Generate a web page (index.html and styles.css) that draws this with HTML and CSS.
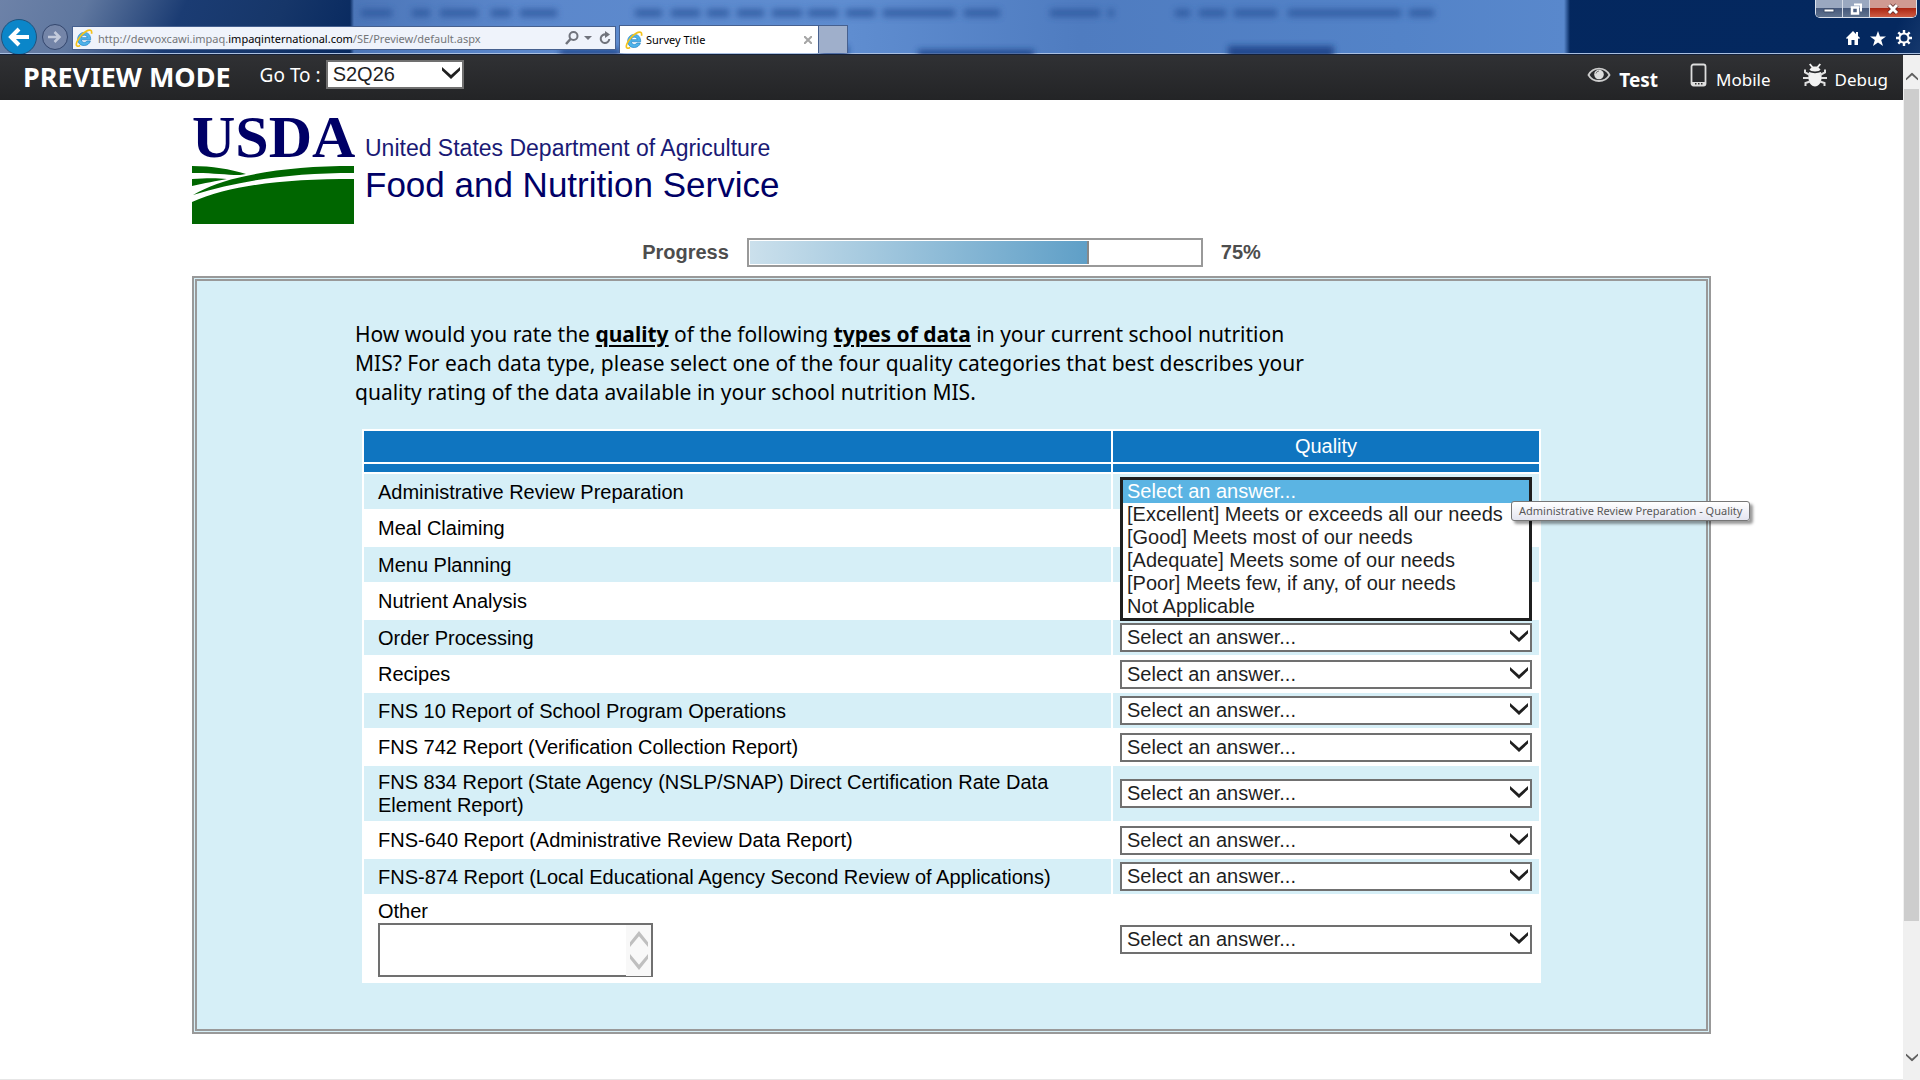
FILE: index.html
```html
<!DOCTYPE html>
<html lang="en">
<head>
<meta charset="utf-8">
<title>Survey Title</title>
<link rel="stylesheet" href="styles.css">
</head>
<body>
<svg class="defs" aria-hidden="true">
  <symbol id="ie" viewBox="0 0 16 16">
    <path d="M13.9 9.6H5.6c.2 1.5 1.2 2.3 2.7 2.3 1.1 0 1.9-.4 2.4-1.200h3c-.8 2.500-2.900 4-5.500 4-3.400 0-5.800-2.300-5.800-5.700S4.900 3 8.200 3c3.700 0 5.900 2.600 5.700 6.600zM10.800 7.700C10.700 6.300 9.700 5.500 8.300 5.500c-1.400 0-2.400.8-2.600 2.200z" fill="#4db3ea" stroke="#1d7fc4" stroke-width=".6"/>
    <path d="M14.600 4.300c.4-1.500.2-2.700-.7-3.100C12 .4 8.200 2.500 5.100 6.200 1.900 9.900.3 13.800 1.700 15c.6.5 1.700.3 2.900-.3" fill="none" stroke="#f3c21b" stroke-width="1.500"/>
  </symbol>
  <symbol id="chevron" viewBox="0 0 18 12">
    <path d="M0 0l9 8 9-8v3.500L9 12 0 3.500z" fill="currentColor"/>
  </symbol>
</svg>

<header class="chrome">
  <svg class="backdrop" aria-hidden="true">
    <defs><filter id="soft" x="-5%" y="-100%" width="110%" height="300%"><feGaussianBlur stdDeviation="3"/></filter></defs>
    <g filter="url(#soft)" fill="#2f589e" opacity=".8">
      <path d="M361 9h31v8h-31zM412 9h18v8h-18zM440 9h38v8h-38zM491 9h20v8h-20zM520 9h37v8h-37zM635 9h27v8h-27zM671 9h29v8h-29zM707 9h22v8h-22zM737 9h27v8h-27zM772 9h30v8h-30zM808 9h30v8h-30zM846 9h29v8h-29zM883 9h72v8h-72zM964 9h36v8h-36zM1050 9h50v8h-50zM1108 9h6v8h-6zM1175 9h15v8h-15zM1199 9h27v8h-27zM1234 9h43v8h-43zM1288 9h113v8h-113zM1409 9h25v8h-25z"/>
      <path d="M560 49h60v8h-60zM820 46h28v10h-28zM918 50h116v8h-116zM1228 46h106v14h-106z" fill="#123a80"/>
    </g>
  </svg>
  <div class="caption">
    <button class="cap" aria-label="Minimize"><svg width="12" height="8" viewBox="0 0 12 8"><path d="M1 4h10v3H1z" fill="#fff" stroke="#3d4c68" stroke-width="1"/></svg></button>
    <button class="cap" aria-label="Restore"><svg width="14" height="14" viewBox="0 0 14 14"><path d="M5 2.500h7v7" fill="none" stroke="#fff" stroke-width="2"/><path d="M3 5.500h6v6H3z" fill="none" stroke="#fff" stroke-width="2.500"/></svg></button>
    <button class="cap close" aria-label="Close"><svg width="12" height="12" viewBox="0 0 12 12"><path d="M2 2l8 8M10 2l-8 8" stroke="#5a2a2a" stroke-width="4.500"/><path d="M2 2l8 8M10 2l-8 8" stroke="#fff" stroke-width="3"/></svg></button>
  </div>
  <div class="navbar">
    <button class="back" aria-label="Back"><svg width="24" height="24" viewBox="0 0 24 24"><path d="M22 12H5M12 4l-8 8 8 8" fill="none" stroke="#fff" stroke-width="4"/></svg></button>
    <button class="forward" aria-label="Forward"><svg width="14" height="14" viewBox="0 0 14 14"><path d="M0 7h11M6.500 2l5 5-5 5" fill="none" stroke="#c3cbdc" stroke-width="2.500"/></svg></button>
    <div class="address">
      <svg width="18" height="18"><use href="#ie"/></svg>
      <span class="url">http://devvoxcawi.impaq.<b>impaqinternational.com</b>/SE/Preview/default.aspx</span>
      <button class="plain" aria-label="Search"><svg width="14" height="14" viewBox="0 0 14 14"><circle cx="8.500" cy="5" r="4" fill="none" stroke="#70737c" stroke-width="2"/><path d="M5.500 8L1 13" stroke="#70737c" stroke-width="2.500"/></svg></button>
      <button class="plain" aria-label="Search options"><svg width="8" height="4"><path d="M0 0h8L4 4z" fill="#70737c"/></svg></button>
      <button class="plain reload" aria-label="Refresh"><svg width="12" height="14" viewBox="0 0 12 14"><path d="M7 3.500A4.300 4.300 0 1 0 10.300 8" fill="none" stroke="#70737c" stroke-width="2"/><path d="M6 0l5 3.500L6 7z" fill="#70737c"/></svg></button>
    </div>
    <div class="tab">
      <svg width="18" height="18"><use href="#ie"/></svg>
      <span class="tab-title">Survey Title</span>
      <button class="plain" aria-label="Close tab"><svg width="8" height="8" viewBox="0 0 8 8"><path d="M0 0l8 8M8 0L0 8" stroke="#a5a5a5" stroke-width="2"/></svg></button>
    </div>
    <button class="new-tab" aria-label="New tab"></button>
    <div class="tools">
      <button class="plain" aria-label="Home"><svg width="14" height="14" viewBox="0 0 14 14"><path d="M7 0L0 7l1 1 1-.7V14h3.500V9h3v5H12V7.300l1 .7 1-1-2-2V1h-2v2z" fill="#fff"/></svg></button>
      <button class="plain" aria-label="Favorites"><svg width="16" height="15" viewBox="0 0 16 15"><path d="M8 0l2 5.500h6L11.200 9l1.800 6-5-3.600L3 15l1.800-6L0 5.500h6z" fill="#fff"/></svg></button>
      <button class="plain" aria-label="Tools"><svg width="16" height="16" viewBox="0 0 16 16"><circle cx="8" cy="8" r="4.500" fill="none" stroke="#fff" stroke-width="2"/><path d="M8 0v3M8 13v3M0 8h3M13 8h3M2.300 2.300l2.200 2.200M11.500 11.500l2.200 2.200M2.300 13.700l2.200-2.200M11.500 4.500l2.200-2.200" stroke="#fff" stroke-width="2.400"/></svg></button>
    </div>
  </div>
</header>

<div class="viewport">
  <div class="page">
    <nav class="preview">
      <strong class="mode">PREVIEW MODE</strong>
      <label for="goto">Go To :</label>
      <span class="pick goto"><select id="goto"><option>S2Q26</option></select><svg width="18" height="12"><use href="#chevron"/></svg></span>
      <div class="views">
        <a href="#test" class="view current"><svg width="24" height="16" viewBox="0 0 24 16"><path d="M1.500 8C6-.5 18-.5 22.500 8 18 16 6 16 1.500 8z" fill="none" stroke="#ccc" stroke-width="1.800"/><circle cx="12" cy="7.500" r="4.800" fill="#ddd"/><path d="M9 6.500A3.200 3.200 0 0 1 12 4" fill="none" stroke="#777"/></svg><span>Test</span></a>
        <a href="#mobile" class="view"><svg width="18" height="24" viewBox="0 0 18 24"><rect x="1.500" y="1.500" width="14" height="21" rx="2" fill="none" stroke="#ddd" stroke-width="1.800"/><path d="M2 19h13v3.500H2z" fill="#ddd"/><path d="M5 20.800h1.500M8 20.800h1.500M11 20.800h1.500" stroke="#333" stroke-width="1.500"/></svg><span>Mobile</span></a>
        <a href="#debug" class="view"><svg width="24" height="24" viewBox="0 0 24 24"><path d="M6.500 6.500C7 9 17 9 17.500 6.500L15.500 4.500l2.500-3-1.500-1L14 3.500h-4L7.500.5 6 1.500l2.500 3zM6 9c3.500 1.500 8.500 1.500 12 0 1.500 6 .5 14-6 14.500C5.500 23 4.500 15 6 9z" fill="#f2f2f2"/><path d="M7 12L2 9.500V6.500M6 15H0M7 18.500L2.500 20v3M17 12l5-2.500v-3M18 15h6M17 18.500l4.500 1.500v3" fill="none" stroke="#e0e0e0" stroke-width="2"/></svg><span>Debug</span></a>
      </div>
    </nav>

    <main class="survey">
      <div class="brand">
        <div class="seal">
          <span class="usda">USDA</span>
          <svg class="fields" viewBox="0 0 162 58" aria-hidden="true"><path d="M0 0c20 0 38 3 54 8-4 1-8 1-12 1C30 8 15 7 0 7zM54 10C85 3 120 0 162 0v7C100 7 50 14 1 29c14-8 32-15 53-19zM0 13c14-1 26-1 35 0C25 15 12 17 0 20zM0 36C42 18 96 13 162 13v45H0z" fill="#060"/></svg>
        </div>
        <div class="agency">
          <span class="dept">United States Department of Agriculture</span>
          <span class="fns">Food and Nutrition Service</span>
        </div>
      </div>

      <div class="progress">
        <span id="plabel">Progress</span>
        <div class="track" role="progressbar" aria-labelledby="plabel" aria-valuenow="75"><div class="fill" style="width: 75%"></div></div>
        <span>75%</span>
      </div>

      <form class="panel">
        <p class="question">How would you rate the <b>quality</b> of the following <b>types of data</b> in your current school nutrition MIS? For each data type, please select one of the four quality categories that best describes your quality rating of the data available in your school nutrition MIS.</p>
        <table class="grid">
          <thead>
            <tr><th class="item"></th><th>Quality</th></tr>
            <tr class="rule"><td></td><td></td></tr>
          </thead>
          <tbody>
            <tr><td><label for="q1">Administrative Review Preparation</label></td><td class="open">
              <div class="slot">
                <select id="q1" class="list" size="6"><option selected>Select an answer...</option><option>[Excellent] Meets or exceeds all our needs</option><option>[Good] Meets most of our needs</option><option>[Adequate] Meets some of our needs</option><option>[Poor] Meets few, if any, of our needs</option><option>Not Applicable</option></select>
                <span class="tooltip" role="tooltip">Administrative Review Preparation - Quality</span>
              </div></td></tr>
            <tr><td><label for="q2">Meal Claiming</label></td><td><span class="pick"><select id="q2"><option>Select an answer...</option></select><svg width="18" height="12"><use href="#chevron"/></svg></span></td></tr>
            <tr><td><label for="q3">Menu Planning</label></td><td><span class="pick"><select id="q3"><option>Select an answer...</option></select><svg width="18" height="12"><use href="#chevron"/></svg></span></td></tr>
            <tr><td><label for="q4">Nutrient Analysis</label></td><td><span class="pick"><select id="q4"><option>Select an answer...</option></select><svg width="18" height="12"><use href="#chevron"/></svg></span></td></tr>
            <tr><td><label for="q5">Order Processing</label></td><td><span class="pick"><select id="q5"><option>Select an answer...</option></select><svg width="18" height="12"><use href="#chevron"/></svg></span></td></tr>
            <tr><td><label for="q6">Recipes</label></td><td><span class="pick"><select id="q6"><option>Select an answer...</option></select><svg width="18" height="12"><use href="#chevron"/></svg></span></td></tr>
            <tr><td><label for="q7">FNS 10 Report of School Program Operations</label></td><td><span class="pick"><select id="q7"><option>Select an answer...</option></select><svg width="18" height="12"><use href="#chevron"/></svg></span></td></tr>
            <tr><td><label for="q8">FNS 742 Report (Verification Collection Report)</label></td><td><span class="pick"><select id="q8"><option>Select an answer...</option></select><svg width="18" height="12"><use href="#chevron"/></svg></span></td></tr>
            <tr><td><label for="q9">FNS 834 Report (State Agency (NSLP/SNAP) Direct Certification Rate Data Element Report)</label></td><td><span class="pick"><select id="q9"><option>Select an answer...</option></select><svg width="18" height="12"><use href="#chevron"/></svg></span></td></tr>
            <tr><td><label for="q10">FNS-640 Report (Administrative Review Data Report)</label></td><td><span class="pick"><select id="q10"><option>Select an answer...</option></select><svg width="18" height="12"><use href="#chevron"/></svg></span></td></tr>
            <tr><td><label for="q11">FNS-874 Report (Local Educational Agency Second Review of Applications)</label></td><td><span class="pick"><select id="q11"><option>Select an answer...</option></select><svg width="18" height="12"><use href="#chevron"/></svg></span></td></tr>
            <tr><td class="other"><label for="other">Other</label>
              <div class="memo"><textarea id="other"></textarea><div class="steps" aria-hidden="true"><svg class="up" width="18" height="16" viewBox="0 0 18 12" preserveAspectRatio="none"><use href="#chevron"/></svg><svg width="18" height="16" viewBox="0 0 18 12" preserveAspectRatio="none"><use href="#chevron"/></svg></div></div></td><td><span class="pick"><select id="q12" aria-label="Other - Quality"><option>Select an answer...</option></select><svg width="18" height="12"><use href="#chevron"/></svg></span></td></tr>
          </tbody>
        </table>
      </form>
    </main>
  </div>
  <div class="scrollbar" aria-hidden="true">
    <svg class="up" width="12" height="9" viewBox="0 0 18 12"><use href="#chevron"/></svg>
    <div class="rail"><div class="thumb"></div></div>
    <svg width="12" height="9" viewBox="0 0 18 12"><use href="#chevron"/></svg>
  </div>
</div>
</body>
</html>
```
FILE: styles.css
```css
* { box-sizing: border-box; }

body {
  margin: 0;
  min-height: 100vh;
  display: flex;
  flex-direction: column;
  background: #fff;
  color: #000;
  font: 20px/23px "Liberation Sans", Arial, sans-serif;
}

button, select, textarea { font: inherit; color: inherit; }
button { display: grid; place-items: center; padding: 0; border: 0; background: none; }
svg { display: block; flex: none; }
.defs { position: absolute; width: 0; height: 0; }
.up { transform: rotate(180deg); }

/* Browser frame */
.chrome {
  position: relative;
  display: flex;
  height: 55px;
  overflow: hidden;
  border-bottom: 1px solid #14213a;
  box-shadow: inset 0 -1px #a9bfe0;
  background:
    linear-gradient(90deg, transparent 350px, #4c76b8 354px, #5b87cb 520px, #5f8dd0 850px, #4f7cc0 1080px, #5383c8 1400px, #5988cc 1564px, transparent 1570px),
    linear-gradient(115deg, #6d82a8 0, #5f779f 80px, #1b3c73 170px, #163669 260px, #04265d 360px, #04285f 1730px, #294a7c 1800px, #6880a8 1890px);
}
.backdrop { position: absolute; inset: 0; width: 100%; height: 54px; }
.caption {
  position: absolute;
  top: 0;
  right: 3px;
  display: flex;
  height: 18px;
  border: 1px solid #dbe1ec;
  border-top: 0;
  border-radius: 0 0 5px 5px;
  overflow: hidden;
}
.cap { width: 27px; border-right: 1px solid #d4dae6; background: linear-gradient(#9aa8c0 0 45%, #46597c 50%, #60738f); }
.close { width: 46px; border-right: 0; background: linear-gradient(#d09a92 0 45%, #ac2714 50%, #cf5c43); }

.navbar { position: relative; flex: 1; display: flex; align-items: flex-end; padding-bottom: 1px; }
.back { width: 36px; height: 36px; margin: 0 5px -2px 1px; border: 1px solid #21527c; border-radius: 50%; background: #0b86c9; }
.forward { width: 26px; height: 26px; margin: 0 4px 3px 0; border: 1px solid #33466d; border-radius: 50%; background: #7485a8; }
.address {
  display: flex;
  align-items: center;
  gap: 5px;
  width: 544px;
  height: 24px;
  margin: 0 3px 3px 0;
  padding: 0 4px 0 2px;
  border: 1px solid #46608f;
  background: #eff3fb;
  color: #747679;
}
.url { flex: 1; padding-top: 1px; font: 11px/20px "Noto Sans", sans-serif; white-space: nowrap; }
.url b { font-weight: 400; color: #000; }
.reload { margin-left: 2px; }
.tab {
  display: flex;
  align-items: center;
  gap: 3px;
  width: 200px;
  height: 28px;
  padding: 0 6px 0 5px;
  border: 1px solid #46608f;
  border-bottom: 0;
  background: #fff;
}
.tab-title { flex: 1; padding-top: 1px; font: 11px/20px "Noto Sans", sans-serif; }
.new-tab { width: 29px; height: 28px; border: 1px solid #46608f; border-width: 1px 1px 0 0; background: #9fafcb; }
.tools { display: flex; align-items: center; gap: 10px; margin: 0 8px 7px auto; }

/* Page area */
.viewport { flex: 1; display: flex; }
.page { flex: 1; min-width: 0; border-bottom: 1px solid #e6e6e6; }
.scrollbar { width: 17px; display: flex; flex-direction: column; align-items: center; padding: 17px 0 18px; background: #f0f0f0; color: #606060; }
.rail { flex: 1; width: 15px; margin: 8px 0; }
.thumb { height: 87%; background: #cdcdcd; }

.preview {
  display: flex;
  align-items: center;
  height: 45px;
  padding: 0 15px 0 23px;
  background: linear-gradient(#303134, #232426);
  color: #fff;
  font: 17px/24px "Noto Sans", sans-serif;
}
.mode { margin: 0 29px 2px 0; font-size: 27px; }
.goto { width: 138px; margin: 0 0 7px 5px; font: 20px/23px "Liberation Sans", Arial, sans-serif; }
.preview label { margin-bottom: 6px; font-size: 19px; }
.views { display: flex; gap: 32px; margin-left: auto; }
.view { display: flex; gap: 8px; color: #fff; text-decoration: none; }
.view span { padding-top: 5px; }
.current { font-size: 19px; font-weight: 700; }
.current svg { margin-top: 4px; }

.pick { position: relative; display: block; color: #1f1f1f; }
.pick select {
  display: block;
  width: 100%;
  height: 29px;
  padding: 0 24px 0 5px;
  border: 2px solid #707070;
  border-radius: 0;
  background: #fff;
  appearance: none;
}
.pick svg { position: absolute; right: 4px; top: 7px; pointer-events: none; }

.survey { max-width: 1519px; margin: 0 auto; padding-top: 8px; }

.brand { display: flex; gap: 11px; height: 116px; color: #006; }
.seal { width: 162px; }
.usda { display: block; font: 700 60px/58px "Liberation Serif", "Times New Roman", serif; }
.fields { width: 162px; height: 58px; }
.agency { display: flex; flex-direction: column; padding-top: 27px; white-space: nowrap; }
.dept { font-size: 23px; line-height: 26px; color: #1a1a75; }
.fns { font-size: 35px; line-height: 48px; }

.progress { display: flex; justify-content: center; align-items: center; gap: 18px; margin: 14px 0 9px; color: #4d4d4d; font-weight: 700; }
.track { width: 456px; height: 29px; padding: 1px; border: 2px solid #999; background: #fff; }
.fill { box-sizing: content-box; height: 100%; border-right: 2px solid #888; background: linear-gradient(90deg, #cbe0ec, #5f9fc7); }

.panel { padding: 39px 158px 46px; border: 5px double #999; background: #d6eff7; }
.question { max-width: 970px; margin: 0 0 22px; font: 21px/29px "Noto Sans", Calibri, sans-serif; }
.question b { text-decoration: underline; text-decoration-thickness: 2px; text-underline-offset: 3px; }

.grid { width: calc(100% - 14px); margin: 0 7px; border-spacing: 2px; background: #fff; table-layout: fixed; }
.grid th { height: 31px; padding: 0; background: #0f75c0; color: #fff; font-weight: 400; }
.grid .item { width: 747px; }
.rule td { height: 8px; padding: 0; background: #0f75c0; }
.grid tbody td { padding: 3px 7px; vertical-align: middle; }
.grid tbody td:first-child { padding: 5px 14px 4px; }
.grid tbody tr:nth-child(odd) td { background: #d6eff7; }
.grid tbody tr:nth-child(even) td + td { padding-bottom: 2px; }
.grid label { display: block; }
.grid tbody td.other { padding: 4px 14px; }

.memo { position: relative; width: 275px; }
.memo textarea { display: block; width: 100%; height: 54px; border: 2px solid #707070; border-radius: 0; resize: none; }
.steps { position: absolute; inset: 2px 2px 1px auto; display: flex; flex-direction: column; align-items: center; justify-content: space-evenly; width: 25px; background: #f8f8f8; color: #bfbfbf; }

.slot { position: relative; height: 29px; }
.list {
  position: absolute;
  z-index: 1;
  top: 0;
  left: 0;
  width: 100%;
  height: 144px;
  padding: 0;
  border: 3px solid #1f1f1f;
  border-radius: 0;
  background: #fff;
  color: #1f1f1f;
  overflow: hidden;
}
.list option { min-height: 23px; padding: 0 4px; line-height: 23px; }
.list option:checked { background: #5bb4e3 linear-gradient(#5bb4e3, #5bb4e3); color: #fff; }
.tooltip {
  position: absolute;
  z-index: 2;
  top: 24px;
  left: 391px;
  padding: 0 7px;
  border: 1px solid #767676;
  border-radius: 3px;
  background: linear-gradient(#fff, #e4e5f0);
  box-shadow: 3px 3px 3px rgba(0, 0, 0, .4);
  color: #575757;
  font: 11px/18px "Noto Sans", sans-serif;
  white-space: nowrap;
}
```
